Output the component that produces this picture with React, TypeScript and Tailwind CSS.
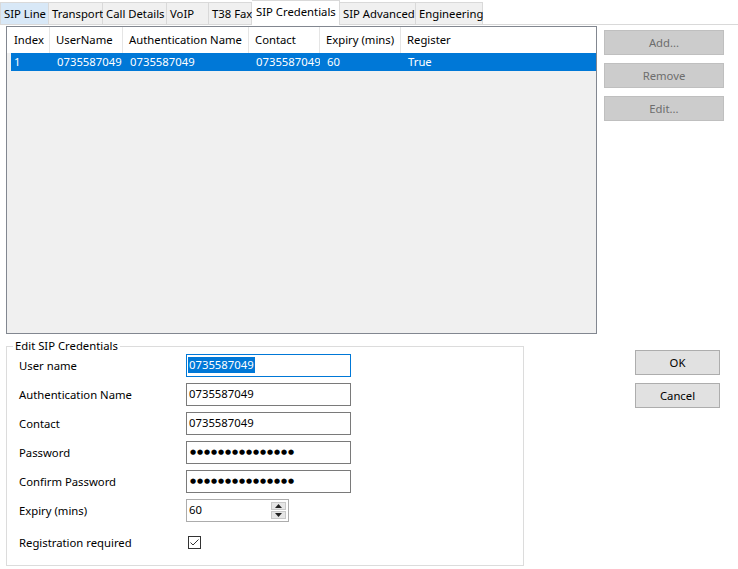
import React from "react";

const tabs: { label: string; w: string; state?: "sel" | "hover" }[] = [
  { label: "SIP Line", w: "w-[49px]", state: "hover" },
  { label: "Transport", w: "w-[54px]" },
  { label: "Call Details", w: "w-[64px]" },
  { label: "VoIP", w: "w-[42px]" },
  { label: "T38 Fax", w: "w-[43px]" },
  { label: "SIP Credentials", w: "w-[88px]", state: "sel" },
  { label: "SIP Advanced", w: "w-[76px]" },
  { label: "Engineering", w: "w-[67px]" },
];

const cols = [
  { h: "Index", v: "1", w: "w-[43px]" },
  { h: "UserName", v: "0735587049", w: "w-[73px]" },
  { h: "Authentication Name", v: "0735587049", w: "w-[126px]" },
  { h: "Contact", v: "0735587049", w: "w-[71px]" },
  { h: "Expiry (mins)", v: "60", w: "w-[81px]" },
  { h: "Register", v: "True", w: "flex-1" },
];

function Dots() {
  return (
    <span className="font-['DejaVu_Sans'] text-[7px] tracking-[0.9px] leading-none">
      {"●●●●●●●●●●●●●●●"}
    </span>
  );
}

function Row({ label, children }: { label: string; children: React.ReactNode }) {
  return (
    <div className="flex items-center h-[23px]">
      <div className="w-[167px] whitespace-nowrap">{label}</div>
      {children}
    </div>
  );
}

export default function App() {
  return (
    <div className="w-[738px] h-[569px] bg-white font-['Noto_Sans',sans-serif] text-[11.3px] text-black flex flex-col overflow-hidden leading-[16px]">
      {/* Tab strip */}
      <div className="h-[25px] flex items-end border-b border-[#d9d9d9]">
        {tabs.map((t, i) =>
          t.state === "sel" ? (
            <div
              key={t.label}
              className={`${t.w} h-[25px] -mb-px bg-white border-t border-r border-[#d9d9d9] flex items-center pl-[4px] pb-[3px] whitespace-nowrap`}
            >
              {t.label}
            </div>
          ) : (
            <div
              key={t.label}
              className={`${t.w} h-[22px] border-t border-r border-[#d9d9d9] flex items-center pl-[3px] whitespace-nowrap ${
                i === 0 ? "border-l" : ""
              } ${t.state === "hover" ? "bg-[#d8e8f7]" : "bg-[#f0f0f0]"}`}
            >
              {t.label}
            </div>
          )
        )}
      </div>

      {/* Upper area */}
      <div className="flex">
        <div className="ml-[6px] mt-[1px] w-[591px] h-[308px] border border-[#828790] bg-[#f0f0f0] flex flex-col">
          <div className="h-[26px] bg-white flex">
            {cols.map((c, i) => (
              <div
                key={c.h}
                className={`${c.w} h-full flex items-center whitespace-nowrap ${i === 0 ? "pl-[7px]" : "pl-[6px]"} ${
                  i < cols.length - 1 ? "border-r border-[#e5e5e5]" : ""
                }`}
              >
                {c.h}
              </div>
            ))}
          </div>
          <div className="h-[18px] flex text-white">
            {cols.map((c, i) => (
              <div
                key={c.h}
                className={`${i === 0 ? "w-[39px] ml-[4px] pl-[3px]" : `${c.w} pl-[7px]`} h-full flex items-center bg-[#0078d7] whitespace-nowrap`}
              >
                {c.v}
              </div>
            ))}
          </div>
        </div>
        <div className="ml-[7px] mt-[5px] flex flex-col gap-[8px]">
          {["Add...", "Remove", "Edit..."].map((b) => (
            <div
              key={b}
              className="w-[120px] h-[25px] bg-[#cccccc] border border-[#bfbfbf] text-[#6d6d6d] flex items-center justify-center"
            >
              {b}
            </div>
          ))}
        </div>
      </div>

      {/* Lower area */}
      <div className="flex">
        <fieldset className="ml-[6px] mt-[4px] w-[518px] border border-[#dcdcdc] pl-[12px] pb-[16px]">
          <legend className="-ml-[6px] px-[2px] leading-[16px]">Edit SIP Credentials</legend>
          <div className="flex flex-col gap-[6px]">
            <Row label="User name">
              <div className="w-[165px] h-[23px] border border-[#0078d7] flex items-center pl-[1px] pb-[2px]">
                <span className="bg-[#0078d7] text-white px-[1px]">0735587049</span>
              </div>
            </Row>
            <Row label="Authentication Name">
              <div className="w-[165px] h-[23px] border border-[#7a7a7a] flex items-center pl-[2px] pb-[2px]">
                0735587049
              </div>
            </Row>
            <Row label="Contact">
              <div className="w-[165px] h-[23px] border border-[#7a7a7a] flex items-center pl-[2px] pb-[2px]">
                0735587049
              </div>
            </Row>
            <Row label="Password">
              <div className="w-[165px] h-[23px] border border-[#7a7a7a] flex items-center pl-[3px]">
                <Dots />
              </div>
            </Row>
            <Row label="Confirm Password">
              <div className="w-[165px] h-[23px] border border-[#7a7a7a] flex items-center pl-[3px]">
                <Dots />
              </div>
            </Row>
            <Row label="Expiry (mins)">
              <div className="w-[103px] h-[23px] border border-[#acacac] flex items-center pl-[2px] pb-[2px]">
                <span>60</span>
                <div className="ml-auto mr-[2px] mt-[2px] w-[15px] flex flex-col gap-[1px]">
                  <div className="h-[8px] bg-[#e6e6e6] border border-[#c8c8c8] flex items-center justify-center">
                    <svg width="7" height="4" viewBox="0 0 7 4">
                      <path d="M0 4 L3.5 0 L7 4 Z" fill="#222" />
                    </svg>
                  </div>
                  <div className="h-[8px] bg-[#e6e6e6] border border-[#c8c8c8] flex items-center justify-center">
                    <svg width="7" height="4" viewBox="0 0 7 4">
                      <path d="M0 0 L3.5 4 L7 0 Z" fill="#222" />
                    </svg>
                  </div>
                </div>
              </div>
            </Row>
            <div className="flex items-center h-[13px] mt-[8px]">
              <div className="w-[169px] whitespace-nowrap">Registration required</div>
              <div className="w-[13px] h-[13px] border border-[#333333] bg-white flex items-center justify-center">
                <svg width="11" height="11" viewBox="0 0 11 11">
                  <path d="M1.5 5.5 L4 8 L9.5 2.5" stroke="#333" strokeWidth="1" fill="none" />
                </svg>
              </div>
            </div>
          </div>
        </fieldset>
        <div className="ml-[111px] mt-[16px] flex flex-col gap-[8px]">
          {["OK", "Cancel"].map((b) => (
            <div
              key={b}
              className="w-[85px] h-[25px] bg-[#e1e1e1] border border-[#adadad] flex items-center justify-center"
            >
              {b}
            </div>
          ))}
        </div>
      </div>
    </div>
  );
}
